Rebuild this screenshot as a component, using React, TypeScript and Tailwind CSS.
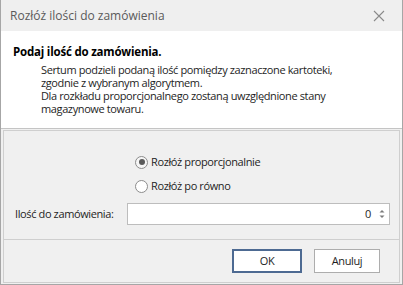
import React from "react";

export default function App() {
  const font = { fontFamily: '"Open Sans", "Noto Sans", sans-serif' };
  return (
    <div
      className="w-[403px] h-[285px] flex flex-col bg-[#f0f0f0] border-x border-b border-[#a6a6a6] text-[11px] tracking-[-0.38px] text-[#1e1e1e] overflow-hidden"
      style={font}
    >
      {/* title bar */}
      <div className="h-[31px] shrink-0 flex items-center justify-between bg-[#efefef] pl-[9px] pr-[17px]">
        <span className="text-[#5a5a5a] text-[12px] tracking-[0px]">Rozłóż ilości do zamówienia</span>
        <svg width="12" height="12" viewBox="0 0 12 12">
          <path d="M1 1 L11 11 M11 1 L1 11" stroke="#8a8a8a" strokeWidth="1.1" />
        </svg>
      </div>
      {/* header */}
      <div className="h-[98px] shrink-0 bg-white border-b border-[#c4c4c4] pt-[12px]">
        <div className="pl-[12px] font-bold text-[11.5px] tracking-[-0.2px] leading-[17px] text-black">Podaj ilość do zamówienia.</div>
        <div className="pl-[40px] pt-[3px] leading-[13px] text-[#1e1e1e]">
          <div>Sertum podzieli podaną ilość pomiędzy zaznaczone kartoteki,</div>
          <div>zgodnie z wybranym algorytmem.</div>
          <div>Dla rozkładu proporcjonalnego zostaną uwzględnione stany</div>
          <div>magazynowe towaru.</div>
        </div>
      </div>
      {/* body */}
      <div className="flex-1 pt-[1px] px-[2px] pb-[1px] flex">
        <div className="flex-1 flex flex-col border border-[#cfcfcf]">
          <div className="h-[109px] border-b border-[#cfcfcf] flex flex-col">
            <div className="flex flex-col gap-[10px] pl-[131px] pt-[24px]">
              <label className="flex items-center gap-[3px] h-[14px]">
                <span className="w-[13px] h-[13px] rounded-full border border-[#8c8c8c] bg-[#f6f6f6] flex items-center justify-center">
                  <span className="w-[6px] h-[6px] rounded-full bg-[#5a5a5a]" />
                </span>
                <span>Rozłóż proporcjonalnie</span>
              </label>
              <label className="flex items-center gap-[3px] h-[14px]">
                <span className="w-[13px] h-[13px] rounded-full border border-[#8c8c8c] bg-white" />
                <span>Rozłóż po równo</span>
              </label>
            </div>
            <div className="flex items-center pl-[11px] mt-[10px]">
              <span className="w-[112px]">Ilość do zamówienia:</span>
              <div className="w-[263px] h-[22px] bg-white border border-[#bdbdbd] flex items-center justify-end pr-[4px]">
                <span className="mr-[8px]">0</span>
                <svg width="6" height="12" viewBox="0 0 6 12">
                  <path d="M0.5 4.5 L3 2 L5.5 4.5 Z" fill="#7a7a7a" />
                  <path d="M0.5 7.5 L3 10 L5.5 7.5 Z" fill="#7a7a7a" />
                </svg>
              </div>
            </div>
          </div>
          <div className="flex-1 flex justify-end items-start gap-[12px] pr-[19px] pt-[9px]">
            <button className="w-[70px] h-[24px] border-2 border-[#4d6a92] bg-white text-[11px]">OK</button>
            <button className="w-[66px] h-[24px] border border-[#adadad] bg-white text-[11px]">Anuluj</button>
          </div>
        </div>
      </div>
    </div>
  );
}
